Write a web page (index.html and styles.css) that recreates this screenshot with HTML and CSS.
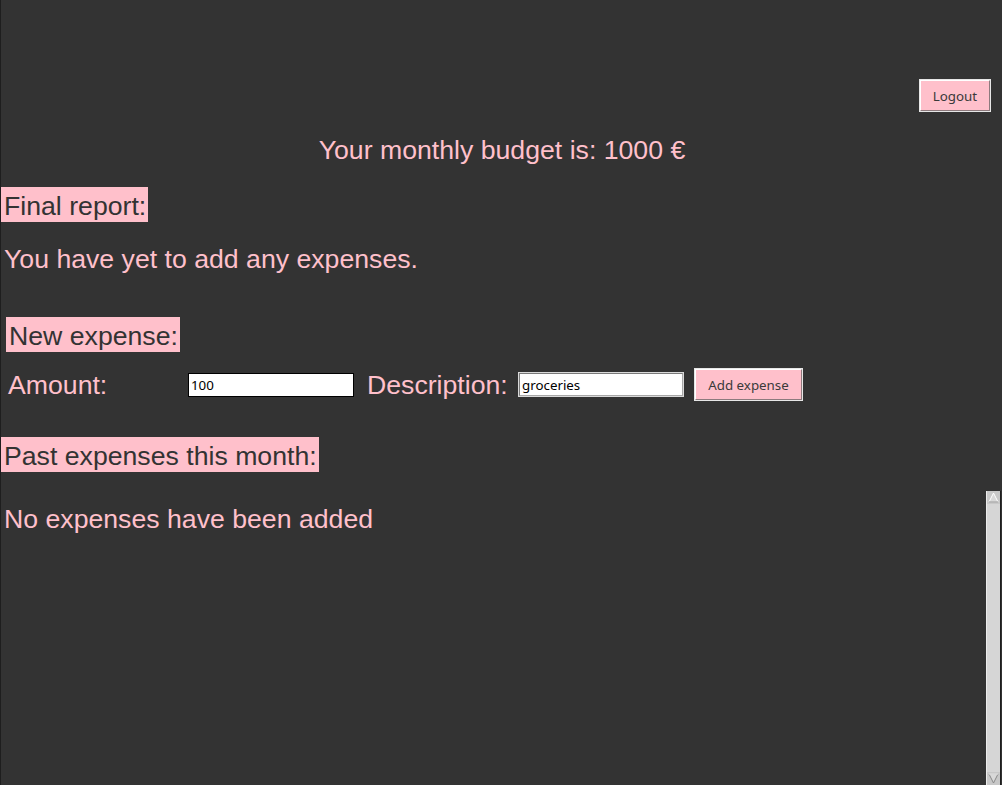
FILE: index.html
```html
<!DOCTYPE html>
<html>
<head>
<meta charset="utf-8">
<link rel="stylesheet" href="styles.css">
</head>
<body>
<div class="app">
  <div class="topbar">
    <button class="btn logout">Logout</button>
  </div>
  <div class="budget">Your monthly budget is: 1000 €</div>
  <div class="section report-title"><span class="tag">Final report:</span></div>
  <div class="text report-text">You have yet to add any expenses.</div>
  <div class="section new-title"><span class="tag">New expense:</span></div>
  <div class="form-row">
    <span class="lbl amount-lbl">Amount:</span>
    <input class="field focused" type="text" value="100">
    <span class="lbl desc-lbl">Description:</span>
    <input class="field desc-field" type="text" value="groceries">
    <button class="btn add">Add expense</button>
  </div>
  <div class="section past-title"><span class="tag">Past expenses this month:</span></div>
  <div class="text past-text">No expenses have been added</div>
</div>
<div class="scrollbar">
  <div class="arrow up"><svg width="11" height="11" viewBox="0 0 11 11"><polygon points="5.5,1 10,10 1,10" fill="#d9d9d9" stroke="#ffffff" stroke-width="1"/><polyline points="10,10 1,10" fill="none" stroke="#8a8a8a"/></svg></div>
  <div class="trough"></div>
  <div class="arrow down"><svg width="11" height="11" viewBox="0 0 11 11"><polygon points="1,1 10,1 5.5,10" fill="#d9d9d9" stroke="#8a8a8a" stroke-width="1"/><polyline points="1,1 10,1" fill="none" stroke="#ffffff"/></svg></div>
</div>
</body>
</html>
```

FILE: styles.css
```css
html, body {
  margin: 0;
  padding: 0;
  height: 100%;
}
body {
  background: #333333;
  border-left: 1px solid #1e1e1e;
  box-sizing: border-box;
  overflow: hidden;
  position: relative;
  font-family: "Liberation Sans", Arial, sans-serif;
  color: #ffc0cb;
}
.app {
  display: flex;
  flex-direction: column;
}
.topbar {
  display: flex;
  justify-content: flex-end;
  padding-top: 80px;
  padding-right: 12px;
}
.btn {
  font-family: "Noto Sans", "DejaVu Sans", sans-serif;
  font-size: 13.33px;
  color: #3a3a3a;
  background: #ffc0cb;
  border: 1px solid;
  border-color: #ffffff #8e7a7d #8e7a7d #ffffff;
  box-shadow: 0 0 0 1px #e6e6e6;
  padding: 0;
  margin: 0;
  box-sizing: border-box;
}
.logout {
  width: 70px;
  height: 31px;
}
.budget {
  margin-top: 24px;
  font-size: 26.67px;
  line-height: 30px;
  text-align: center;
  padding-left: 1px;
}
.section {
  display: flex;
}
.tag {
  background: #ffc0cb;
  color: #333333;
  font-size: 26.67px;
  line-height: 30px;
  padding: 4px 2px 0 3px;
  height: 35px;
  box-sizing: border-box;
}
.report-title {
  margin-top: 22px;
}
.text {
  font-size: 26.67px;
  line-height: 30px;
  padding-left: 3px;
}
.report-text {
  margin-top: 22px;
}
.new-title {
  margin-top: 43px;
  padding-left: 5px;
}
.form-row {
  margin-top: 16px;
  display: flex;
  align-items: center;
  height: 33px;
  padding-left: 7px;
}
.lbl {
  font-size: 26.67px;
  line-height: 30px;
  white-space: nowrap;
}
.amount-lbl {
  width: 180px;
}
.field {
  box-sizing: border-box;
  width: 166px;
  height: 24px;
  margin: 0;
  padding: 0 2px;
  border: 1px solid #000000;
  background: #ffffff;
  font-family: "Noto Sans", "DejaVu Sans", sans-serif;
  font-size: 13.33px;
  color: #000000;
  outline: none;
}
.desc-field {
  width: 164px;
  height: 23px;
  margin-left: 1px;
  border-color: #7a7a7a #a8a8a8 #a8a8a8 #7a7a7a;
  box-shadow: 0 0 0 1px #d9d9d9;
}
.desc-lbl {
  margin-left: 13px;
  width: 151px;
}
.add {
  margin-left: 12px;
  width: 107px;
  height: 31px;
}
.past-title {
  margin-top: 36px;
}
.past-text {
  margin-top: 32px;
}
.scrollbar {
  position: absolute;
  right: 1px;
  top: 491px;
  bottom: 0;
  width: 13px;
  display: flex;
  flex-direction: column;
  background: #d9d9d9;
  border-left: 1px solid #ececec;
  border-right: 1px solid #1e1e1e;
}
.arrow {
  height: 13px;
  display: flex;
  align-items: center;
  justify-content: center;
  background: #c8c8c8;
}
.trough {
  flex: 1;
  background: #d6d6d6;
}
```
